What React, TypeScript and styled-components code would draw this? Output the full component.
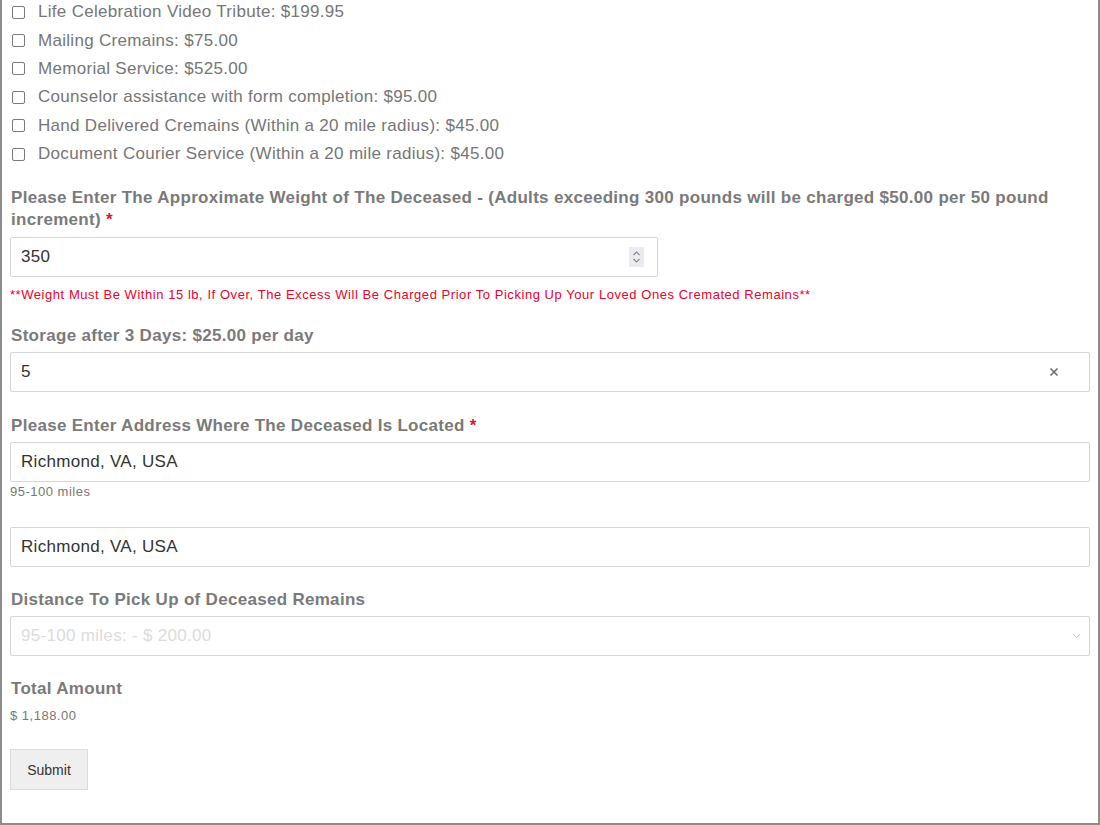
import React from 'react'
import styled, { createGlobalStyle } from 'styled-components'

const GlobalStyle = createGlobalStyle`
  body {
    margin: 0;
    background: #ffffff;
    font-family: 'Liberation Sans', Arial, sans-serif;
  }
`

const Frame = styled.div`
  width: 1100px;
  height: 825px;
  box-sizing: border-box;
  border-left: 2px solid #8c8c8c;
  border-right: 2px solid #8c8c8c;
  border-bottom: 2px solid #8c8c8c;
  overflow: hidden;
  padding: 0 8px 0 8px;
`

const OptionList = styled.div`
  margin-top: -2px;
  display: flex;
  flex-direction: column;
`

const OptionRow = styled.label`
  display: flex;
  align-items: center;
  height: 28.4px;
  font-size: 17px;
  letter-spacing: 0.3px;
  color: #767676;
`

const Box = styled.span`
  width: 11px;
  height: 11px;
  border: 1px solid #7a7a7a;
  border-radius: 2px;
  margin: 0 13px 0 2px;
  background: #fff;
`

const Label = styled.div<{ $top: number; $bottom?: number }>`
  margin-top: ${(p) => p.$top}px;
  margin-bottom: ${(p) => p.$bottom ?? 5}px;
  font-size: 17px;
  letter-spacing: 0.3px;
  line-height: 22px;
  font-weight: bold;
  color: #7a7a7a;
  padding-left: 1px;
`

const Required = styled.span`
  color: #e8102e;
`

const InputBox = styled.div<{ $width?: number }>`
  display: flex;
  align-items: center;
  box-sizing: border-box;
  width: ${(p) => (p.$width ? `${p.$width}px` : '100%')};
  height: 40px;
  border: 1px solid #d6d6d6;
  border-radius: 2px;
  background: #fff;
  padding: 0 10px 0 10px;
`

const Field = styled.input<{ $muted?: boolean }>`
  flex: 1;
  min-width: 0;
  border: none;
  outline: none;
  padding: 0;
  font-family: 'Liberation Sans', Arial, sans-serif;
  font-size: 17px;
  letter-spacing: 0.3px;
  color: ${(p) => (p.$muted ? '#dcdcdc' : '#333')};
  background: transparent;
  &::placeholder {
    color: #dcdcdc;
  }
`

const Spinner = styled.span`
  display: flex;
  align-items: center;
  justify-content: center;
  width: 15px;
  height: 20px;
  margin-right: 3px;
  background: #ebebf0;
`

const Clear = styled.span`
  display: flex;
  margin-right: 20px;
`

const Chevron = styled.span`
  display: flex;
  margin-right: -2px;
`

const Note = styled.div`
  margin-top: 11px;
  font-size: 13px;
  letter-spacing: 0.55px;
  line-height: 14px;
  color: #f0002a;
`

const Hint = styled.div<{ $top?: number }>`
  margin-top: ${(p) => p.$top ?? 3}px;
  font-size: 13px;
  letter-spacing: 0.5px;
  line-height: 14px;
  color: #777;
`

const Spacer = styled.div<{ $h: number }>`
  height: ${(p) => p.$h}px;
`

const SubmitButton = styled.button`
  margin-top: 26px;
  width: 78px;
  height: 41px;
  background: #efefef;
  border: 1px solid #dcdcdc;
  border-radius: 0;
  font-family: 'Liberation Sans', Arial, sans-serif;
  font-size: 14px;
  color: #333;
`

const options = [
  'Life Celebration Video Tribute: $199.95',
  'Mailing Cremains: $75.00',
  'Memorial Service: $525.00',
  'Counselor assistance with form completion: $95.00',
  'Hand Delivered Cremains (Within a 20 mile radius): $45.00',
  'Document Courier Service (Within a 20 mile radius): $45.00',
]

const App = () => {
  return (
    <Frame>
      <GlobalStyle />
      <OptionList>
        {options.map((o) => (
          <OptionRow key={o}>
            <Box />
            {o}
          </OptionRow>
        ))}
      </OptionList>

      <Label $top={19} $bottom={6}>
        Please Enter The Approximate Weight of The Deceased - (Adults exceeding 300 pounds will be charged $50.00 per
        50 pound increment) <Required>*</Required>
      </Label>
      <InputBox $width={648}>
        <Field defaultValue="350" />
        <Spinner>
          <svg width="9" height="14" viewBox="0 0 9 14" fill="none" stroke="#8a8a94" strokeWidth="1.2">
            <path d="M1.5 5 L4.5 2 L7.5 5" />
            <path d="M1.5 9 L4.5 12 L7.5 9" />
          </svg>
        </Spinner>
      </InputBox>
      <Note>
        **Weight Must Be Within 15 lb, If Over, The Excess Will Be Charged Prior To Picking Up Your Loved Ones Cremated
        Remains**
      </Note>

      <Label $top={23}>Storage after 3 Days: $25.00 per day</Label>
      <InputBox>
        <Field defaultValue="5" />
        <Clear>
          <svg width="10" height="10" viewBox="0 0 10 10" stroke="#6e6e6e" strokeWidth="1.6">
            <path d="M1.5 1.5 L8.5 8.5 M8.5 1.5 L1.5 8.5" />
          </svg>
        </Clear>
      </InputBox>

      <Label $top={23}>
        Please Enter Address Where The Deceased Is Located <Required>*</Required>
      </Label>
      <InputBox>
        <Field defaultValue="Richmond, VA, USA" />
      </InputBox>
      <Hint>95-100 miles</Hint>
      <Spacer $h={28} />
      <InputBox>
        <Field defaultValue="Richmond, VA, USA" />
      </InputBox>

      <Label $top={22}>Distance To Pick Up of Deceased Remains</Label>
      <InputBox>
        <Field $muted placeholder="95-100 miles: - $ 200.00" />
        <Chevron>
          <svg width="9" height="6" viewBox="0 0 9 6" fill="none" stroke="#c8c8c8" strokeWidth="1">
            <path d="M1 1 L4.5 4.5 L8 1" />
          </svg>
        </Chevron>
      </InputBox>

      <Label $top={22} $bottom={0}>
        Total Amount
      </Label>
      <Hint $top={9}>$ 1,188.00</Hint>
      <SubmitButton>Submit</SubmitButton>
    </Frame>
  )
}

export default App
